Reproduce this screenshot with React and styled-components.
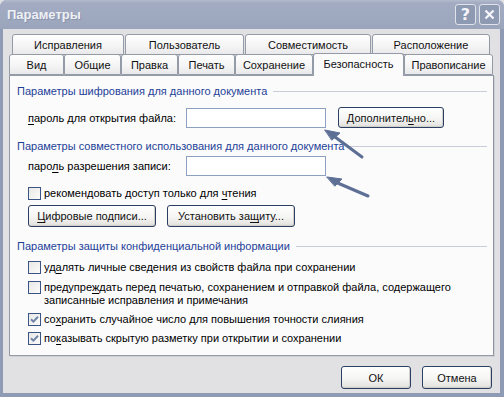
import React from "react";
import styled, { createGlobalStyle } from "styled-components";

const Global = createGlobalStyle`
  html, body { margin: 0; padding: 0; background: #e1e1e3; }
  body { font-family: "Liberation Sans", Arial, sans-serif; font-size: 11px; color: #000; }
  * { box-sizing: border-box; }
`;

const Win = styled.div`
  position: relative;
  width: 504px;
  height: 397px;
  display: flex;
  flex-direction: column;
  background: #8f9ab4;
  border-radius: 7px 7px 0 0;
  overflow: hidden;
`;

const TitleBar = styled.div`
  height: 29px;
  flex: none;
  display: flex;
  align-items: center;
  padding: 0 4px 0 7px;
  background: linear-gradient(#b3bbcd 0px, #a2abc1 3px, #9ea8bf 60%, #9aa4bb 100%);
`;

const Title = styled.div`
  flex: 1;
  color: #eef0f5;
  font-family: "Liberation Sans", Arial, sans-serif;
  font-weight: bold;
  font-size: 13px;
  text-shadow: 1px 1px 0 #8a94ac;
`;

const CapBtn = styled.div`
  width: 21px;
  height: 21px;
  margin-left: 3px;
  border: 1px solid #dfe3ea;
  border-radius: 3px;
  background: #8e99b2;
  color: #f4f6fa;
  display: flex;
  align-items: center;
  justify-content: center;
  font-weight: bold;
  font-size: 16px;
  font-family: "DejaVu Sans", sans-serif;
`;

const Body = styled.div`
  flex: 1;
  margin: 0 4px 4px 3px;
  background: #e1e1e3;
  padding: 5px 6px 0 6px;
  display: flex;
  flex-direction: column;
`;

const TabRow = styled.div`
  display: flex;
  align-items: flex-end;
  height: ${(p) => p.$h}px;
  padding-left: ${(p) => p.$pl}px;
  gap: ${(p) => p.$gap}px;
  position: relative;
  z-index: ${(p) => p.$z};
`;

const Tab = styled.div`
  width: ${(p) => p.$w}px;
  height: ${(p) => (p.$active ? 23 : 21)}px;
  margin-bottom: ${(p) => (p.$active ? -1 : 0)}px;
  border: 1px solid #949aa6;
  border-bottom: ${(p) => (p.$active ? "none" : "1px solid #949aa6")};
  border-radius: 3px 3px 0 0;
  background: ${(p) =>
    p.$active ? "#fbfbfc" : "linear-gradient(#fefefe, #f4f4f5 60%, #e9e9eb)"};
  display: flex;
  align-items: center;
  justify-content: center;
  padding-bottom: ${(p) => (p.$active ? 2 : 0)}px;
  font-size: 11px;
  color: #111;
  white-space: nowrap;
`;

const Panel = styled.div`
  width: 485px;
  height: 281px;
  background: #fbfbfc;
  border: 1px solid #949aa6;
  border-right-color: #8d939f;
  box-shadow: 1px 1px 0 #d0d0d4;
  padding: 6px 6px 0 7px;
  display: flex;
  flex-direction: column;
`;

const Header = styled.div`
  display: flex;
  align-items: center;
  gap: 6px;
  height: 16px;
  margin-top: ${(p) => p.$mt}px;
  color: #1e3f98;
  white-space: nowrap;
  &::after {
    content: "";
    flex: 1;
    height: 1px;
    background: #c8ccd8;
    margin-top: 1px;
  }
`;

const Row = styled.div`
  display: flex;
  align-items: center;
  margin-top: ${(p) => p.$mt}px;
  padding-left: ${(p) => p.$pl ?? 11}px;
  gap: ${(p) => p.$gap ?? 0}px;
`;

const Label = styled.div`
  width: 158px;
  white-space: nowrap;
`;

const Input = styled.div`
  width: 140px;
  height: 20px;
  border: 1px solid #8ba1bf;
  background: #fff;
`;

const Button = styled.div`
  width: ${(p) => p.$w}px;
  height: ${(p) => p.$h ?? 22}px;
  margin-left: ${(p) => p.$ml ?? 0}px;
  border: 1px solid #2b3f62;
  border-radius: 3px;
  background: linear-gradient(#ffffff, #f5f5f4 55%, #e6e5e2 90%, #d7d6d2);
  box-shadow: inset -1px -1px 0 #d0cfcb;
  display: flex;
  align-items: center;
  justify-content: center;
  white-space: nowrap;
  color: #111;
`;

const CheckRow = styled.div`
  display: flex;
  align-items: flex-start;
  gap: 3px;
  margin-top: ${(p) => p.$mt}px;
  padding-left: 11px;
  line-height: 13px;
`;

const Box = styled.div`
  flex: none;
  width: 13px;
  height: 13px;
  border: 1px solid #3a5585;
  background: linear-gradient(135deg, #e8e8e6, #fbfbfa);
  display: flex;
  align-items: center;
  justify-content: center;
`;

const CheckText = styled.div`
  line-height: 13px;
  white-space: nowrap;
`;

const Footer = styled.div`
  display: flex;
  justify-content: flex-end;
  gap: 11px;
  padding: 10px 2px 0 0;
`;

const Overlay = styled.svg`
  position: absolute;
  left: 0;
  top: 0;
  pointer-events: none;
`;

const U = styled.span`
  text-decoration: underline;
  text-underline-offset: 2px;
`;

const Check = () => (
  <svg width="9" height="9" viewBox="0 0 9 9">
    <path d="M1 4.2 L3.4 6.6 L8 1.8" fill="none" stroke="#6f84a8" strokeWidth="2" />
  </svg>
);

export default function App() {
  return (
    <>
      <Global />
      <Win>
        <TitleBar>
          <Title>Параметры</Title>
          <CapBtn>?</CapBtn>
          <CapBtn>
            <svg width="11" height="11" viewBox="0 0 11 11">
              <path d="M1.5 1.5 L9.5 9.5 M9.5 1.5 L1.5 9.5" stroke="#f4f6fa" strokeWidth="2.2" />
            </svg>
          </CapBtn>
        </TitleBar>
        <Body>
          <TabRow $h={21} $pl={3} $gap={1} $z={1}>
            <Tab $w={112}>Исправления</Tab>
            <Tab $w={119}>Пользователь</Tab>
            <Tab $w={126}>Совместимость</Tab>
            <Tab $w={118}>Расположение</Tab>
          </TabRow>
          <TabRow $h={20} $pl={0} $gap={0} $z={2}>
            <Tab $w={55}>Вид</Tab>
            <Tab $w={57}>Общие</Tab>
            <Tab $w={57}>Правка</Tab>
            <Tab $w={57}>Печать</Tab>
            <Tab $w={78}>Сохранение</Tab>
            <Tab $w={91} $active>Безопасность</Tab>
            <Tab $w={89}>Правописание</Tab>
          </TabRow>
          <Panel>
            <Header $mt={1}>Параметры шифрования для данного документа</Header>
            <Row $mt={8}>
              <Label><U>п</U>ароль для открытия файла:</Label>
              <Input />
              <Button $w={106} $h={21} $ml={12}>Дополнител<U>ь</U>но...</Button>
            </Row>
            <Header $mt={10}>Параметры совместного использования для данного документа</Header>
            <Row $mt={2}>
              <Label>паро<U>л</U>ь разрешения записи:</Label>
              <Input />
            </Row>
            <CheckRow $mt={11}>
              <Box />
              <CheckText>рекомендовать доступ только для <U>ч</U>тения</CheckText>
            </CheckRow>
            <Row $mt={5} $gap={11}>
              <Button $w={128}><U>Ц</U>ифровые подписи...</Button>
              <Button $w={128}>Установить за<U>щ</U>иту...</Button>
            </Row>
            <Header $mt={11}>Параметры защиты конфиденциальной информации</Header>
            <CheckRow $mt={7}>
              <Box />
              <CheckText>уд<U>а</U>лять личные сведения из свойств файла при сохранении</CheckText>
            </CheckRow>
            <CheckRow $mt={7}>
              <Box />
              <div>
                <CheckText>предупре<U>ж</U>дать перед печатью, сохранением и отправкой файла, содержащего</CheckText>
                <CheckText>записанные исправления и примечания</CheckText>
              </div>
            </CheckRow>
            <CheckRow $mt={6}>
              <Box><Check /></Box>
              <CheckText>со<U>х</U>ранить случайное число для повышения точности слияния</CheckText>
            </CheckRow>
            <CheckRow $mt={6}>
              <Box><Check /></Box>
              <CheckText>по<U>к</U>азывать скрытую разметку при открытии и сохранении</CheckText>
            </CheckRow>
          </Panel>
          <Footer>
            <Button $w={70} $h={23}>ОК</Button>
            <Button $w={70} $h={23}>Отмена</Button>
          </Footer>
        </Body>
        <Overlay width="504" height="397">
          <g stroke="#5e6f96" strokeWidth="3" fill="#5e6f96" strokeLinecap="round">
            <line x1="362" y1="157" x2="331" y2="134" />
            <polygon points="325,130 340,133 332,140" strokeWidth="1" />
            <line x1="368" y1="196" x2="333" y2="181" />
            <polygon points="327,177 342,179 335,186" strokeWidth="1" />
          </g>
        </Overlay>
      </Win>
    </>
  );
}
